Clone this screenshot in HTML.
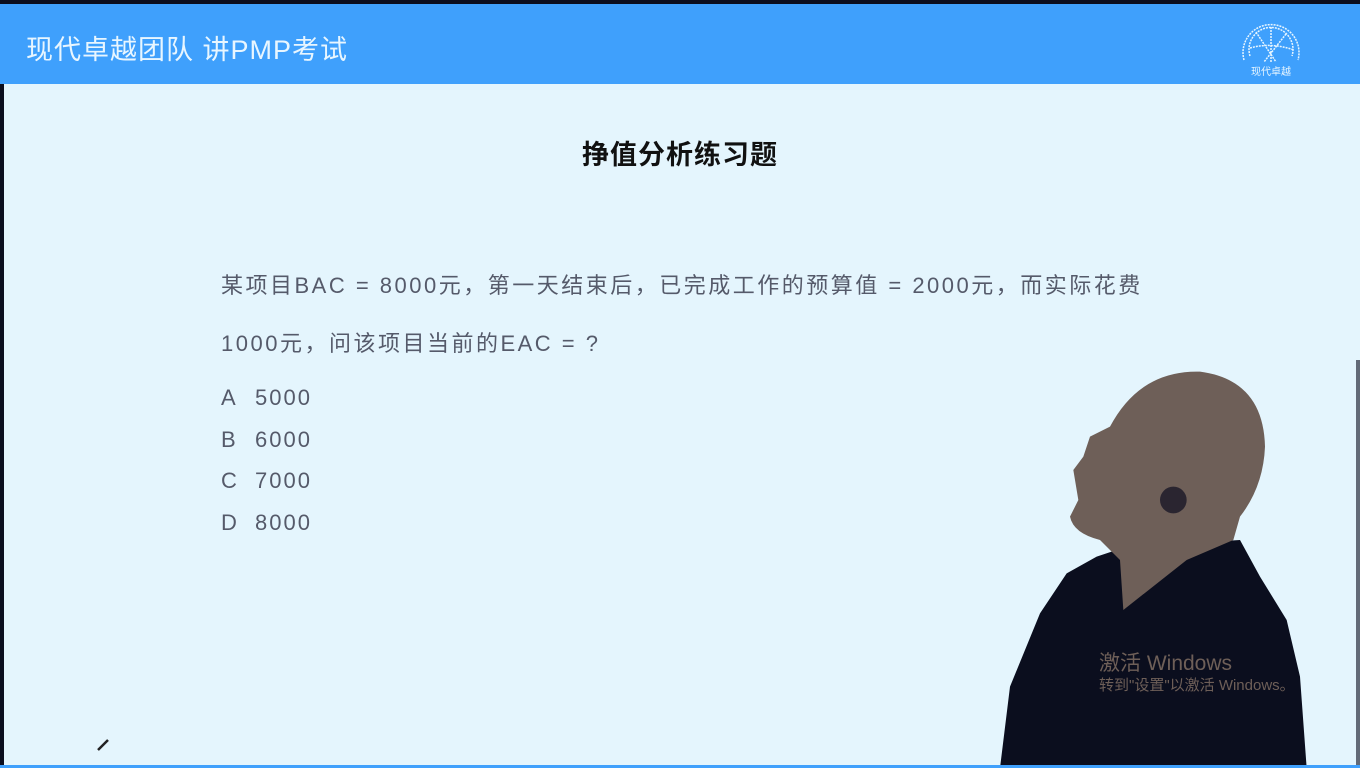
<!DOCTYPE html>
<html><head><meta charset="utf-8"><style>
body{margin:0;width:1360px;height:768px;overflow:hidden;background:#e4f5fd;position:relative;font-family:"Liberation Sans","Noto Sans CJK SC",sans-serif}
.top{position:absolute;left:0;top:0;width:1360px;height:4px;background:#0b0e1e}
.hdr{position:absolute;left:0;top:4px;width:1360px;height:80px;background:#3fa0fc}
.ht{position:absolute;left:26px;top:28px;color:#e8f6ff;font-size:27px;letter-spacing:1px}
.lft{position:absolute;left:0;top:84px;width:4px;height:684px;background:#0b0e1e}
.bot{position:absolute;left:0;top:765px;width:1360px;height:3px;background:#3fa0fc}
.title{position:absolute;left:0;width:1360px;top:133px;text-align:center;font-size:27px;font-weight:bold;color:#111;letter-spacing:1px}
.q{position:absolute;left:221px;font-size:22px;color:#555a6a;letter-spacing:2.5px;white-space:nowrap}
.o{position:absolute;left:221px;font-size:22px;color:#555a6a;letter-spacing:2px}
.o span{display:inline-block;width:34px}
.wm{position:absolute;left:1099px;color:#6e5f58;white-space:nowrap}
</style></head><body>
<div class="top"></div>
<div class="hdr"></div>
<div class="ht">现代卓越团队 讲PMP考试</div>
<svg style="position:absolute;left:1236px;top:12px" width="70" height="66" viewBox="0 0 70 66">
<g fill="none" stroke="#e8f6ff" stroke-width="1.5" stroke-dasharray="2 1">
<path d="M8 48 A28 28 0 1 1 62 48"/><path d="M14 44 A22 22 0 1 1 56 44"/>
<path d="M20 20 L40 50 M50 22 L28 50 M14 36 Q35 30 58 38 M35 15 L35 50"/>
</g>
<text x="35" y="63" font-size="10" fill="#e8f6ff" text-anchor="middle" font-family="Noto Sans CJK SC">现代卓越</text>
</svg>
<div class="lft"></div>
<div class="title">挣值分析练习题</div>
<div class="q" style="top:268px">某项目BAC = 8000元，第一天结束后，已完成工作的预算值 = 2000元，而实际花费</div>
<div class="q" style="top:326px">1000元，问该项目当前的EAC = ?</div>
<div class="o" style="top:385px"><span>A</span>5000</div>
<div class="o" style="top:427px"><span>B</span>6000</div>
<div class="o" style="top:468px"><span>C</span>7000</div>
<div class="o" style="top:510px"><span>D</span>8000</div>
<svg style="position:absolute;left:1000px;top:360px" width="360" height="408" viewBox="0 0 1080 1224">
<path d="M0 1224 L30 980 L120 760 L200 640 L290 590 L380 560 L720 540 L780 650 L860 780 L900 950 L920 1224 Z" fill="#0b0e1e"/>
<path d="M330 200 Q420 30 600 35 Q790 60 795 260 Q790 380 720 470 L700 540 L560 600 L370 750 L360 600 L300 540 Q220 520 210 470 L235 420 L220 330 L250 290 L270 230 Z" fill="#6e5f58"/>
<circle cx="520" cy="420" r="40" fill="#2a2530"/>
<rect x="1068" y="0" width="12" height="1224" fill="#0b0e1e" opacity="0.6"/>
</svg>
<div class="wm" style="top:647px;font-size:21px">激活 Windows</div>
<div class="wm" style="top:674px;font-size:15px">转到"设置"以激活 Windows。</div>
<svg style="position:absolute;left:96px;top:738px" width="14" height="14"><path d="M2 12 L12 2" stroke="#222" stroke-width="2.5"/></svg>
<div class="bot"></div>
</body></html>
